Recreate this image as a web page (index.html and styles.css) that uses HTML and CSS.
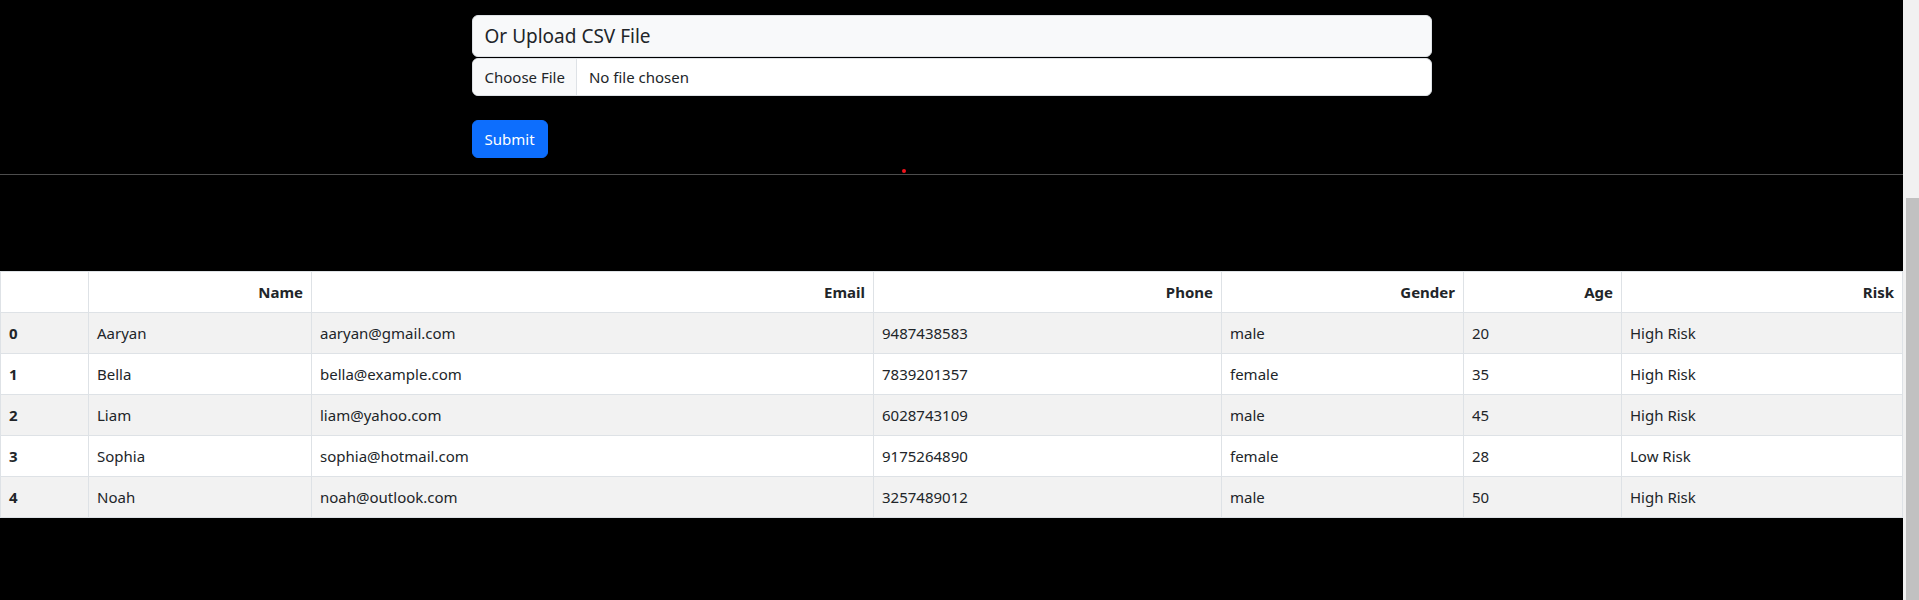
FILE: index.html
```html
<!DOCTYPE html>
<html lang="en">
<head>
<meta charset="utf-8">
<title>Upload CSV</title>
<link rel="stylesheet" href="styles.css">
</head>
<body>
<div class="page">
  <main class="main">
    <section class="upload">
      <div class="upload-title">Or Upload CSV File</div>
      <div class="file-input">
        <span class="file-btn">Choose File</span>
        <span class="file-name">No file chosen</span>
      </div>
      <button class="submit" type="button">Submit</button>
    </section>
    <div class="divider"><span class="dot"></span></div>
    <table class="data">
      <thead>
        <tr><th></th><th>Name</th><th>Email</th><th>Phone</th><th>Gender</th><th>Age</th><th>Risk</th></tr>
      </thead>
      <tbody>
        <tr><th>0</th><td>Aaryan</td><td>aaryan@gmail.com</td><td>9487438583</td><td>male</td><td>20</td><td>High Risk</td></tr>
        <tr><th>1</th><td>Bella</td><td>bella@example.com</td><td>7839201357</td><td>female</td><td>35</td><td>High Risk</td></tr>
        <tr><th>2</th><td>Liam</td><td>liam@yahoo.com</td><td>6028743109</td><td>male</td><td>45</td><td>High Risk</td></tr>
        <tr><th>3</th><td>Sophia</td><td>sophia@hotmail.com</td><td>9175264890</td><td>female</td><td>28</td><td>Low Risk</td></tr>
        <tr><th>4</th><td>Noah</td><td>noah@outlook.com</td><td>3257489012</td><td>male</td><td>50</td><td>High Risk</td></tr>
      </tbody>
    </table>
  </main>
  <div class="scrollbar"><div class="thumb"></div></div>
</div>
</body>
</html>
```

FILE: styles.css
```css
html, body {
  margin: 0;
  padding: 0;
  height: 600px;
  overflow: hidden;
  background: #000;
}
body {
  font-family: "Noto Sans", "Liberation Sans", Arial, sans-serif;
  color: #212529;
}
.page {
  display: flex;
  height: 600px;
}
.main {
  flex: 1;
  min-width: 0;
  padding-top: 15px;
}
.upload {
  width: 960px;
  margin: 0 auto;
  display: flex;
  flex-direction: column;
  align-items: flex-start;
}
.upload-title {
  align-self: stretch;
  box-sizing: border-box;
  height: 42px;
  padding: 0 12px;
  line-height: 40px;
  font-size: 19px;
  background: #f8f9fa;
  border: 1px solid #dee2e6;
  border-radius: 6px;
}
.file-input {
  align-self: stretch;
  box-sizing: border-box;
  height: 38px;
  margin-top: 1px;
  display: flex;
  background: #fff;
  border: 1px solid #dee2e6;
  border-radius: 6px;
  overflow: hidden;
  font-size: 15px;
  line-height: 36px;
}
.file-btn {
  padding: 0 11px 0 12px;
  background: #f8f9fa;
  border-right: 1px solid #dee2e6;
}
.file-name {
  padding: 0 12px;
}
.submit {
  margin-top: 24px;
  height: 38px;
  padding: 0 12px;
  border: 1px solid #0d6efd;
  border-radius: 6px;
  background: #0d6efd;
  color: #fff;
  font-family: inherit;
  font-size: 15px;
}
.divider {
  position: relative;
  margin-top: 16px;
  height: 1px;
  background: #4d4d4d;
}
.dot {
  position: absolute;
  left: 902px;
  top: -5px;
  width: 4px;
  height: 4px;
  border-radius: 50%;
  background: #f0141c;
}
.data {
  margin-top: 96px;
  width: 100%;
  table-layout: fixed;
  border-collapse: collapse;
  background: #fff;
  font-size: 15px;
  line-height: 24px;
}
.data th, .data td {
  padding: 8px;
  border: 1px solid #dee2e6;
  white-space: nowrap;
  overflow: hidden;
}
.data thead th {
  text-align: right;
  font-weight: 700;
}
.data tbody th {
  text-align: left;
  font-weight: 700;
}
.data tbody td {
  font-weight: 400;
}
.data tbody tr:nth-child(odd) {
  background: #f2f2f2;
}
.data th:nth-child(1) { width: 71px; }
.data th:nth-child(2) { width: 206px; }
.data th:nth-child(3) { width: 545px; }
.data th:nth-child(4) { width: 331px; }
.data th:nth-child(5) { width: 225px; }
.data th:nth-child(6) { width: 141px; }
.data th:nth-child(7) { width: auto; }
.data tr > :first-child { border-left: 1px solid #dee2e6; }
.scrollbar {
  width: 16px;
  flex: none;
  background: #f1f1f1;
  display: flex;
  flex-direction: column;
  justify-content: flex-end;
  align-items: center;
}
.thumb {
  width: 13px;
  height: 402px;
  margin-left: 3px;
  background: #c1c1c1;
}
```
